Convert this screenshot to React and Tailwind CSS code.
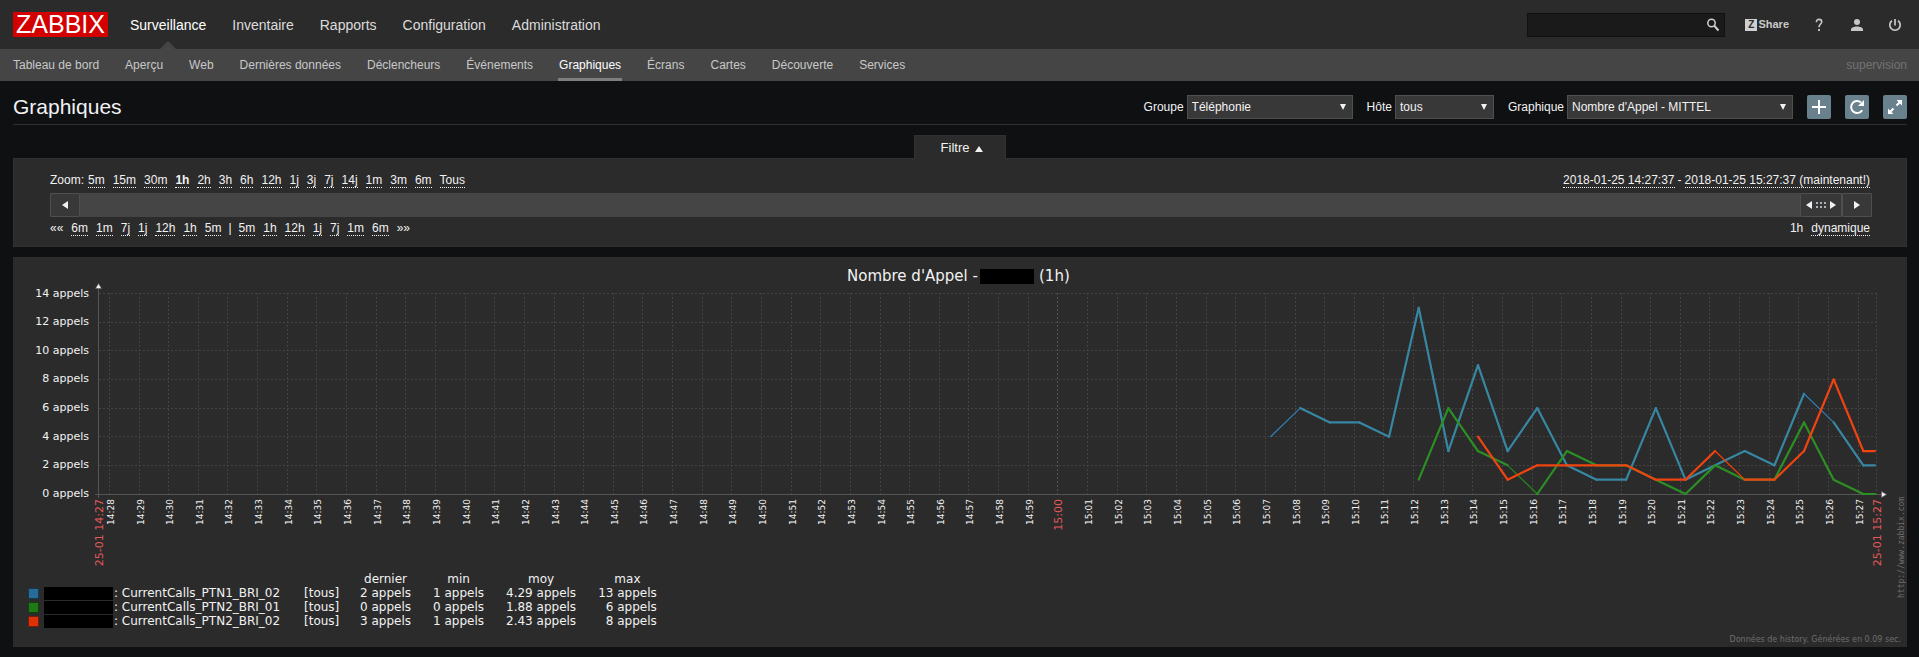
import React from "react";

const MENU = ["Surveillance", "Inventaire", "Rapports", "Configuration", "Administration"];
const SUBMENU = [
  "Tableau de bord", "Aperçu", "Web", "Dernières données", "Déclencheurs", "Événements",
  "Graphiques", "Écrans", "Cartes", "Découverte", "Services",
];
const ZOOMS = ["5m", "15m", "30m", "1h", "2h", "3h", "6h", "12h", "1j", "3j", "7j", "14j", "1m", "3m", "6m", "Tous"];
const BACK = ["6m", "1m", "7j", "1j", "12h", "1h", "5m"];
const FORWARD = ["5m", "1h", "12h", "1j", "7j", "1m", "6m"];

const LEGEND = [
  { color: "bg-[#276b99] border-[#16384f]", name: "CurrentCalls_PTN1_BRI_02", values: ["2 appels", "1 appels", "4.29 appels", "13 appels"] },
  { color: "bg-[#1f7a16] border-[#12400d]", name: "CurrentCalls_PTN2_BRI_01", values: ["0 appels", "0 appels", "1.88 appels", "6 appels"] },
  { color: "bg-[#e03005] border-[#70200a]", name: "CurrentCalls_PTN2_BRI_02", values: ["3 appels", "1 appels", "2.43 appels", "8 appels"] },
];

/* One value per minute; the last one is the value at the end of the period. */
const SERIES = [
  { start: 7, thin: 7, color: "#3787a3", thinColor: "#2f7fb5", data: [4, 6, 5, 5, 4, 13, 3, 9, 3, 6, 2, 1, 1, 6, 1, 2, 3, 2, 7, 5, 2, 2] },
  { start: 12, thin: 15, color: "#2c8f24", thinColor: "#238a1b", data: [1, 6, 3, 2, 0, 3, 2, 2, 1, 0, 2, 1, 1, 5, 1, 0, 0] },
  { start: 14, thin: 22, color: "#f04410", thinColor: "#ff3c00", data: [4, 1, 2, 2, 2, 2, 1, 1, 3, 1, 1, 3, 8, 3, 3] },
];

const yOf = (v) => 237 - 14.32 * v;
const xOf = (m) => (m > 27 ? 1862 : 1257.5 + (m - 7) * 29.64);

function segments(s) {
  return s.data.slice(1).map((v, i) => {
    const m = s.start + i;
    return {
      x1: xOf(m), y1: yOf(s.data[i]), x2: xOf(m + 1), y2: yOf(v),
      thin: m === s.thin || (s.start === 7 && m === 25),
    };
  });
}

function TimeLabel({ x, major, children }) {
  return (
    <text
      transform={`translate(${x} 242) rotate(-90)`}
      textAnchor="end"
      className={major ? "fill-[#e45959] text-[11px]" : "fill-[#f2f2f2] text-[9px]"}
    >
      {children}
    </text>
  );
}

function Chart() {
  const minutes = Array.from({ length: 60 }, (_, k) => {
    const minute = 28 + k;
    const hour = 14 + Math.floor(minute / 60);
    return {
      x: Math.floor(96.4 + 29.64 * k) + 0.5,
      label: `${hour}:${String(minute % 60).padStart(2, "0")}`,
      major: minute % 60 === 0,
    };
  });
  return (
    <svg viewBox="0 0 1894 315" className="block h-auto w-full overflow-visible font-['DejaVu_Sans',sans-serif]" role="img" aria-label="Nombre d'Appel (1h)">
      <text x="834" y="24" className="fill-[#f2f2f2] text-[15px]">Nombre d'Appel -</text>
      <rect x="967" y="12" width="54" height="15" fill="#000" />
      <text x="1026" y="24" className="fill-[#f2f2f2] text-[15px]">(1h)</text>

      <g stroke="#444444" strokeDasharray="2 2" shapeRendering="crispEdges">
        {[2, 4, 6, 8, 10, 12, 14].map((v) => (
          <line key={v} x1="86" x2="1863" y1={Math.floor(yOf(v)) + 0.5} y2={Math.floor(yOf(v)) + 0.5} />
        ))}
        {minutes.map((t) => (
          <line key={t.label} x1={t.x} x2={t.x} y1="36" y2="237" stroke={t.major ? "#545454" : "#444444"} />
        ))}
        <line x1="1863.5" x2="1863.5" y1="36" y2="237" />
      </g>
      <g stroke="#555555" shapeRendering="crispEdges">
        <line x1="85.5" x2="85.5" y1="30" y2="241" />
        <line x1="82" x2="1870" y1="237.5" y2="237.5" />
      </g>
      <path d="M82.5 31.5 L85.5 26.5 L88.5 31.5 Z" fill="#f2f2f2" stroke="#5a5a5a" strokeWidth="0.6" />
      <path d="M1868.5 234.5 L1873.5 237.5 L1868.5 240.5 Z" fill="#f2f2f2" stroke="#5a5a5a" strokeWidth="0.6" />

      {[0, 2, 4, 6, 8, 10, 12, 14].map((v) => (
        <text key={v} x="76" y={Math.round(yOf(v)) + 3} textAnchor="end" className="fill-[#f2f2f2] text-[11px]">
          {v} appels
        </text>
      ))}

      {minutes.map((t) => (
        <TimeLabel key={t.label} x={t.x + 4} major={t.major}>{t.label}</TimeLabel>
      ))}
      <TimeLabel x={90} major>25-01 14:27</TimeLabel>
      <TimeLabel x={1868} major>25-01 15:27</TimeLabel>

      {SERIES.map((s) => (
        <g key={s.start} strokeLinecap="round">
          {segments(s).map((p) => (
            <line
              key={p.x1} x1={p.x1} y1={p.y1} x2={p.x2} y2={p.y2}
              stroke={p.thin ? s.thinColor : s.color} strokeWidth={p.thin ? 1.2 : 2.2}
            />
          ))}
        </g>
      ))}

      <text transform="translate(1891 341) rotate(-90)" className="fill-[#6e6e6e] font-['DejaVu_Sans_Mono',monospace] text-[8px]">
        http://www.zabbix.com
      </text>
    </svg>
  );
}

function DottedLink({ bold, children }) {
  return (
    <a href="#" className={`border-b border-dotted border-[#f2f2f2] leading-[14px] ${bold ? "font-bold" : ""}`}>
      {children}
    </a>
  );
}

function Select({ id, label, value, width }) {
  return (
    <div className="flex items-center gap-[3px]">
      <label htmlFor={id}>{label}</label>
      <div className={`relative ${width}`}>
        <select id={id} className="block h-6 w-full appearance-none border border-[#4f4f4f] bg-[#383838] pr-5 pl-1 text-xs text-[#f2f2f2]">
          <option>{value}</option>
        </select>
        <svg viewBox="0 0 6 6" className="pointer-events-none absolute top-[9px] right-[7px] size-[6px]" aria-hidden="true">
          <path d="M0 0h6L3 6Z" fill="#f2f2f2" />
        </svg>
      </div>
    </div>
  );
}

function IconButton({ label, children }) {
  return (
    <button type="button" aria-label={label} className="flex size-6 items-center justify-center rounded-[2px] bg-[#69808d]">
      <svg viewBox="0 0 24 24" className="size-6" fill="none" stroke="#fff" strokeWidth="2" aria-hidden="true">
        {children}
      </svg>
    </button>
  );
}

function Header() {
  return (
    <header>
      <div className="flex h-[49px] items-center bg-[#2b2b2b] pr-[17px] pl-[13px]">
        <a href="#" className="flex h-[25px] w-[95px] items-center justify-center bg-[#d40000] text-[25px] leading-[25px] text-white">
          ZABBIX
        </a>
        <nav className="ml-[22px] flex h-full gap-[26px] text-sm">
          {MENU.map((m, i) => (
            <a key={m} href="#" className={`relative flex items-center ${i === 0 ? "text-white" : "text-[#dcdcdc]"}`}>
              {m}
              {i === 0 && (
                <svg viewBox="0 0 16 8" className="absolute bottom-0 left-1/2 h-2 w-4 -translate-x-1/2" aria-hidden="true">
                  <path d="M8 0 16 8H0Z" fill="#454545" />
                </svg>
              )}
            </a>
          ))}
        </nav>
        <form className="relative ml-auto">
          <input type="text" aria-label="Recherche" className="block h-6 w-[198px] border border-[#111] bg-[#1a1a1a] pr-6 pl-1 text-xs text-[#f2f2f2] outline-none" />
          <button type="button" aria-label="Rechercher" className="absolute top-[5px] right-[5px] size-[14px]">
            <svg viewBox="0 0 14 14" fill="none" stroke="#d0d0d0" aria-hidden="true">
              <circle cx="5.5" cy="5" r="3.700" strokeWidth="1.5" />
              <path d="m8.500 8 4 4.500" strokeWidth="2" />
            </svg>
          </button>
        </form>
        <a href="#" className="ml-5 flex items-center gap-px text-[11px] font-bold text-[#c8c8c8]">
          <span className="flex size-3 items-center justify-center bg-[#d0d0d0] text-[10px] leading-3 text-[#2b2b2b]">Z</span>
          Share
        </a>
        <a href="#" aria-label="Aide" className="ml-[25px]">
          <svg viewBox="0 0 10 14" className="h-[14px] w-[10px]" aria-hidden="true">
            <path d="M2.4 4.2C2.4 2.2 3.4 1.4 5 1.4s2.7.9 2.7 2.5C7.7 6 5 6.1 5 9.2" fill="none" stroke="#c8c8c8" strokeWidth="1.6" />
            <rect x="4.1" y="11" width="1.8" height="2" fill="#c8c8c8" />
          </svg>
        </a>
        <a href="#" aria-label="Profil" className="ml-[27px]">
          <svg viewBox="0 0 12 12" className="size-3" fill="#c8c8c8" aria-hidden="true">
            <circle cx="6" cy="3" r="3" />
            <path d="M0 12V10.600C0 8.600 3 7.600 6 7.600s6 1 6 3V12Z" />
          </svg>
        </a>
        <a href="#" aria-label="Déconnexion" className="ml-[25px]">
          <svg viewBox="0 0 14 14" className="size-[14px]" fill="none" stroke="#c8c8c8" strokeWidth="1.7" aria-hidden="true">
            <path d="M7 1v6.500" />
            <path d="M4 2.800a5.200 5.200 0 1 0 6 0" />
          </svg>
        </a>
      </div>
      <div className="flex h-8 bg-[#454545] px-3 text-xs text-[#c8c8c8]">
        <nav className="flex gap-6">
          {SUBMENU.map((m) => (
            <a
              key={m}
              href="#"
              className={`flex items-center border-b-[3px] px-px pt-[3px] ${m === "Graphiques" ? "border-[#7f7f7f] text-white" : "border-transparent"}`}
            >
              {m}
            </a>
          ))}
        </nav>
        <span className="ml-auto flex items-center text-[#737373]">supervision</span>
      </div>
    </header>
  );
}

function TitleBar() {
  return (
    <div className="mb-[10px] flex h-11 items-center border-b border-[#303030] pt-[9px]">
      <h1 className="text-[21px] leading-6">Graphiques</h1>
      <form className="ml-auto flex items-center text-xs">
        <div className="flex gap-[14px]">
          <Select id="groupe" label="Groupe" value="Téléphonie" width="w-[166px]" />
          <Select id="hote" label="Hôte" value="tous" width="w-[99px]" />
          <Select id="graphique" label="Graphique" value="Nombre d'Appel - MITTEL" width="w-[226px]" />
        </div>
        <div className="ml-[14px] flex gap-[14px]">
          <IconButton label="Ajouter aux favoris">
            <path d="M12 5v14M5 12h14" />
          </IconButton>
          <IconButton label="Actualiser">
            <path d="M17.200 15.200A6 6 0 1 1 16 7.400" strokeWidth="2" />
            <path d="M19 5v6h-6Z" fill="#fff" stroke="none" />
          </IconButton>
          <IconButton label="Plein écran">
            <path d="M13.500 5H19v5.500ZM5 13.500V19h5.500Z" fill="#fff" stroke="none" />
            <path d="m13.500 10.500 3-3M10.500 13.500l-3 3" strokeWidth="2" />
          </IconButton>
        </div>
      </form>
    </div>
  );
}

function Filter() {
  return (
    <section>
      <div className="flex justify-center">
        <button type="button" className="-mb-px flex h-6 items-center gap-[6px] border border-b-0 border-[#303030] bg-[#2b2b2b] pr-[22px] pl-[26px] text-[13px]">
          Filtre
          <svg viewBox="0 0 8 6" className="mt-[2px] h-[6px] w-2" aria-hidden="true">
            <path d="M4 0 8 6H0Z" fill="#f2f2f2" />
          </svg>
        </button>
      </div>
      <div className="border border-[#303030] bg-[#2b2b2b] pt-[14px] pr-[34px] pl-9 text-xs leading-[14px]">
        <div className="flex h-5 items-start pr-[2px]">
          <span className="mr-1">Zoom:</span>
          <div className="flex gap-2">
            {ZOOMS.map((z) => (
              <DottedLink key={z} bold={z === "1h"}>{z}</DottedLink>
            ))}
          </div>
          <div className="ml-auto flex gap-[3px]">
            <DottedLink>2018-01-25 14:27:37</DottedLink>
            <span>-</span>
            <DottedLink>2018-01-25 15:27:37 (maintenant!)</DottedLink>
          </div>
        </div>
        <div className="flex h-6 bg-[#454545]">
          <button type="button" aria-label="Période précédente" className="flex w-[30px] items-center justify-center rounded-[2px] border border-[#4f4f4f] bg-[#383838]">
            <svg viewBox="0 0 6 8" className="h-2 w-[6px]" aria-hidden="true">
              <path d="M6 0v8L0 4Z" fill="#f2f2f2" />
            </svg>
          </button>
          <button type="button" aria-label="Période affichée" className="ml-auto flex w-[42px] items-center justify-center rounded-[2px] border border-[#4f4f4f] bg-[#383838]">
            <svg viewBox="0 0 30 8" className="h-2 w-[30px]" fill="#f2f2f2" aria-hidden="true">
              <path d="M6 0v8L0 4ZM24 0v8l6-4Z" />
              <path d="M10 1h2v2h-2ZM14 1h2v2h-2ZM18 1h2v2h-2ZM10 5h2v2h-2ZM14 5h2v2h-2ZM18 5h2v2h-2Z" fill="#a9b5bb" />
            </svg>
          </button>
          <button type="button" aria-label="Période suivante" className="flex w-[30px] items-center justify-center rounded-[2px] border border-[#4f4f4f] bg-[#383838]">
            <svg viewBox="0 0 6 8" className="h-2 w-[6px]" aria-hidden="true">
              <path d="M0 0v8l6-4Z" fill="#f2f2f2" />
            </svg>
          </button>
        </div>
        <div className="flex h-[29px] items-start pt-1 pr-[2px]">
          <div className="flex gap-2">
            <span>««</span>
            {BACK.map((z) => (
              <DottedLink key={z}>{z}</DottedLink>
            ))}
          </div>
          <span className="mx-[7px]">|</span>
          <div className="flex gap-2">
            {FORWARD.map((z) => (
              <DottedLink key={z}>{z}</DottedLink>
            ))}
            <span>»»</span>
          </div>
          <div className="ml-auto flex gap-2">
            <span>1h</span>
            <DottedLink>dynamique</DottedLink>
          </div>
        </div>
      </div>
    </section>
  );
}

function Legend() {
  return (
    <table className="ml-[15px] border-collapse font-['DejaVu_Sans',sans-serif] text-xs leading-[14px]">
      <thead>
        <tr className="h-[14px]">
          <td className="w-4" />
          <td className="w-[260px]" />
          <td className="w-14" />
          <th className="p-0 font-normal">dernier</th>
          <th className="p-0 pl-[22px] font-normal">min</th>
          <th className="p-0 pl-[22px] font-normal">moy</th>
          <th className="p-0 pl-[22px] font-normal">max</th>
        </tr>
      </thead>
      <tbody>
        {LEGEND.map((row) => (
          <tr key={row.name} className="h-[14px]">
            <td className="p-0">
              <span className={`block size-[11px] border ${row.color}`} />
            </td>
            <td className="p-0">
              <div className="flex items-center">
                <span className="mr-px block h-[13px] w-[69px] bg-black" />
                <span>: {row.name}</span>
              </div>
            </td>
            <td className="p-0">[tous]</td>
            {row.values.map((v, i) => (
              <td key={i} className={`p-0 text-right whitespace-nowrap ${i ? "pl-[22px]" : ""}`}>{v}</td>
            ))}
          </tr>
        ))}
      </tbody>
    </table>
  );
}

export default function App() {
  return (
    <div className="min-h-screen bg-[#0e1012] font-['Liberation_Sans',Arial,sans-serif] text-[#f2f2f2]">
      <Header />
      <main className="pr-3 pb-[10px] pl-[13px]">
        <TitleBar />
        <Filter />
        <section className="mt-[10px] bg-[#2b2b2b]">
          <Chart />
          <Legend />
          <p className="flex h-[19px] items-center justify-end pt-1 pr-[6px] font-['DejaVu_Sans',sans-serif] text-[8px] text-[#6e6e6e]">
            Données de history. Générées en 0.09 sec.
          </p>
        </section>
      </main>
    </div>
  );
}
